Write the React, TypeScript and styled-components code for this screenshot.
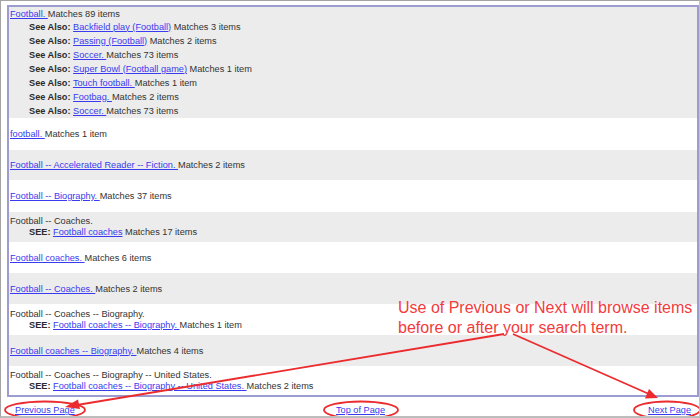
import React from "react";
import styled, { createGlobalStyle } from "styled-components";

const Global = createGlobalStyle`
  html, body { margin: 0; padding: 0; background: #ffffff; }
  body { font-family: "Liberation Sans", Arial, sans-serif; }
  * { box-sizing: border-box; }
`;

const Frame = styled.div`
  position: relative;
  width: 700px;
  height: 418px;
  border-top: 1px solid #a3a3a3;
  border-left: 1px solid #a3a3a3;
  border-right: 1px solid #c4c4c4;
  border-bottom: 2px solid #bcbcbc;
  padding: 4px 0 0 6px;
  display: flex;
  flex-direction: column;
  background: #ffffff;
  overflow: hidden;
`;

const Results = styled.div`
  border: 2px solid #9d9cd1;
  height: 392px;
  display: flex;
  flex-direction: column;
`;

const Row = styled.div<{ $h: number; $shade: boolean }>`
  height: ${(p) => p.$h}px;
  background: ${(p) => (p.$shade ? "#ececec" : "#ffffff")};
  display: flex;
  flex-direction: column;
  justify-content: center;
  padding-left: 1px;
  font-size: 9.2px;
  color: #333333;
`;

const Line = styled.div<{ $lh: number; $indent?: boolean }>`
  line-height: ${(p) => p.$lh}px;
  height: ${(p) => p.$lh}px;
  white-space: nowrap;
  padding-left: ${(p) => (p.$indent ? 19 : 0)}px;
`;

const Label = styled.b`
  font-weight: bold;
  color: #2b2b2b;
`;

const Link = styled.a`
  color: #3a3af0;
  text-decoration: underline;
  cursor: pointer;
`;

const Footer = styled.div`
  height: 19px;
  display: grid;
  grid-template-columns: 321px 1fr auto;
  padding: 7px 8px 0 8px;
  font-size: 9.2px;
  line-height: 12px;
`;

const Callout = styled.div`
  position: absolute;
  left: 397px;
  top: 297px;
  font-size: 16px;
  line-height: 20px;
  color: #f23c3c;
  white-space: nowrap;
`;

const Overlay = styled.svg`
  position: absolute;
  left: 0;
  top: 0;
  width: 700px;
  height: 418px;
  pointer-events: none;
`;

type Sub = { label: string; link: string; note: string };
type Entry = { h: number; link?: string; text?: string; note?: string; subs?: Sub[]; subLh?: number };

const entries: Entry[] = [
  {
    h: 111,
    link: "Football. ",
    note: "Matches 89 items",
    subLh: 14,
    subs: [
      { label: "See Also:", link: "Backfield play (Football)", note: " Matches 3 items" },
      { label: "See Also:", link: "Passing (Football)", note: " Matches 2 items" },
      { label: "See Also:", link: "Soccer. ", note: "Matches 73 items" },
      { label: "See Also:", link: "Super Bowl (Football game)", note: " Matches 1 item" },
      { label: "See Also:", link: "Touch football. ", note: "Matches 1 item" },
      { label: "See Also:", link: "Footbag. ", note: "Matches 2 items" },
      { label: "See Also:", link: "Soccer. ", note: "Matches 73 items" },
    ],
  },
  { h: 32, link: "football. ", note: "Matches 1 item" },
  { h: 30, link: "Football -- Accelerated Reader -- Fiction. ", note: "Matches 2 items" },
  { h: 32, link: "Football -- Biography. ", note: "Matches 37 items" },
  {
    h: 30,
    text: "Football -- Coaches.",
    subLh: 11,
    subs: [{ label: "SEE:", link: "Football coaches", note: " Matches 17 items" }],
  },
  { h: 31, link: "Football coaches. ", note: "Matches 6 items" },
  { h: 31, link: "Football -- Coaches. ", note: "Matches 2 items" },
  {
    h: 31,
    text: "Football -- Coaches -- Biography.",
    subLh: 11,
    subs: [{ label: "SEE:", link: "Football coaches -- Biography. ", note: "Matches 1 item" }],
  },
  { h: 31, link: "Football coaches -- Biography. ", note: "Matches 4 items" },
  {
    h: 29,
    text: "Football -- Coaches -- Biography -- United States.",
    subLh: 11,
    subs: [
      {
        label: "SEE:",
        link: "Football coaches -- Biography -- United States. ",
        note: "Matches 2 items",
      },
    ],
  },
];

export default function App() {
  return (
    <>
      <Global />
      <Frame>
        <Results>
          {entries.map((e, i) => (
            <Row key={i} $h={e.h} $shade={i % 2 === 0}>
              <Line $lh={e.subs ? (e.subLh === 14 ? 12 : 11) : 12}>
                {e.link ? <Link>{e.link}</Link> : e.text}
                {e.note}
              </Line>
              {e.subs?.map((s, j) => (
                <Line key={j} $lh={e.subLh ?? 12} $indent>
                  <Label>{s.label}</Label> <Link>{s.link}</Link>
                  {s.note}
                </Line>
              ))}
            </Row>
          ))}
        </Results>
        <Footer>
          <span>
            <Link>Previous Page</Link>
          </span>
          <span>
            <Link>Top of Page</Link>
          </span>
          <span>
            <Link>Next Page</Link>
          </span>
        </Footer>
        <Callout>
          Use of Previous or Next will browse items
          <br />
          before or after your search term.
        </Callout>
        <Overlay viewBox="0 0 700 418">
          <g fill="none" stroke="#ec2b2f" strokeWidth="1.8">
            <line x1="503" y1="333" x2="76" y2="404" />
            <line x1="512" y1="333" x2="648" y2="393" />
            <ellipse cx="44" cy="409" rx="40" ry="8.5" />
            <ellipse cx="360" cy="409" rx="37" ry="8.5" />
            <ellipse cx="666" cy="409" rx="33" ry="8.5" />
          </g>
          <g fill="#ec2b2f">
            <polygon points="64,406 77,398.5 79,408" />
            <polygon points="657,397 644,397.5 648,388" />
          </g>
        </Overlay>
      </Frame>
    </>
  );
}
